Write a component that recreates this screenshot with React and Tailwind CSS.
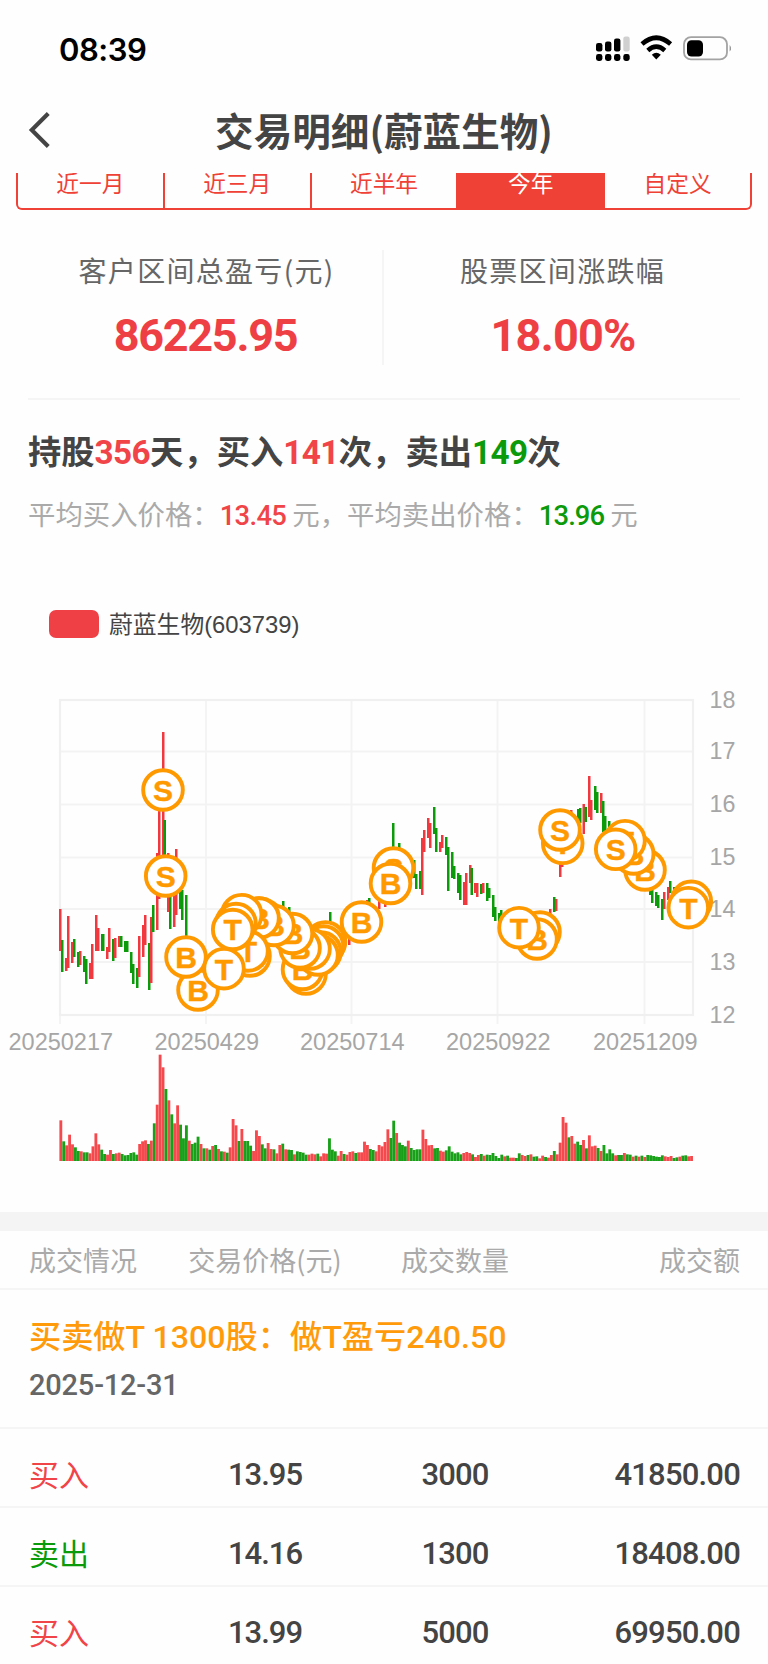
import { ChevronLeft } from 'lucide-react';

const RED = '#f0383e';
const GREEN = '#0a9a0a';
const ORANGE = '#ff9900';

const periods = ['近一月', '近三月', '近半年', '今年', '自定义'];

const trades = [
  { side: 'buy', price: '13.95', amount: '3000', total: '41850.00' },
  { side: 'sell', price: '14.16', amount: '1300', total: '18408.00' },
  { side: 'buy', price: '13.99', amount: '5000', total: '69950.00' },
];

// [x, high, low], positive x = up day, negative x = down day
const candles = [
  [60, 909, 951], [-62, 940, 972], [66, 958, 971], [68, 916, 968], [72, 942, 963],
  [-74, 939, 957], [-78, 952, 967], [80, 951, 965], [-84, 956, 972], [-86, 959, 984],
  [90, 963, 979], [92, 944, 979], [96, 915, 951], [98, 928, 951], [-102, 934, 951],
  [-103, 934, 951], [107, 947, 959], [109, 928, 952], [-113, 939, 961], [115, 938, 958],
  [119, 936, 947], [-121, 936, 947], [-125, 941, 952], [-127, 941, 952], [-131, 952, 973],
  [-133, 964, 984], [-137, 968, 988], [139, 936, 977], [143, 925, 957], [145, 915, 945],
  [-149, 943, 990], [151, 917, 983], [-153, 905, 932], [157, 853, 930], [159, 810, 899],
  [163, 732, 857], [-164.5, 820, 857], [168, 853, 912], [-170, 890, 929], [174, 890, 927],
  [176, 849, 915], [-180, 890, 909], [-182, 890, 920], [-186, 895, 938], [-283, 901, 915],
  [-289, 907, 915], [-330, 912, 925], [349, 930, 945], [367, 900, 905], [-369, 898, 905],
  [379, 900, 909], [385, 900, 907], [-393, 823, 850], [-399, 843, 852], [-414, 860, 878],
  [-416, 874, 889], [-420, 871, 889], [422, 838, 895], [424, 830, 852], [428, 818, 838],
  [430, 823, 848], [-434, 807, 834], [-436, 828, 852], [440, 842, 852], [442, 835, 848],
  [-446, 837, 855], [-448, 847, 891], [-452, 852, 878], [-454, 866, 879], [-458, 873, 893],
  [-460, 875, 900], [464, 882, 905], [466, 873, 905], [470, 865, 883], [-471.5, 868, 895],
  [475, 883, 893], [477, 883, 897], [-481, 884, 894], [483, 883, 893], [-487, 883, 901],
  [-489, 888, 898], [-493, 895, 917], [-495, 907, 921], [-499, 913, 922], [-501, 910, 920],
  [550, 909, 915], [-554, 897, 912], [556, 899, 911], [560, 863, 877], [562, 864, 867],
  [571, 810, 815], [-578, 809, 822], [-580, 808, 823], [583.5, 804, 834], [-585.5, 807, 822],
  [589, 776, 817], [591, 800, 820], [-595, 786, 810], [-597, 792, 813], [601, 793, 813],
  [-603, 801, 832], [-605, 816, 832], [-609, 821, 827], [-650, 890, 895], [-652, 890, 903],
  [-656, 892, 906], [-658, 895, 908], [-662, 899, 920], [664, 892, 909], [668, 887, 900],
  [-670, 881, 893], [-674, 887, 890],
];

// one value per trading day, negative = down day
const volumes = [
  122, -59, 47, 79, 50, -41, -30, 29, -26, -26, 23, 44, 83, 50, -34, -21, 19, 33, -21, 23,
  25, -21, -17, -18, -24, -26, -19, 51, 59, 62, -51, 61, -113, 169, 319, 281, -216, 182, -140, 113,
  167, -109, -68, -107, 61, -51, -55, -73, 51, -38, 38, -34, 45, -48, 36, -29, 28, -25, 41, 126,
  107, -60, 96, -60, -60, -46, 30, 92, 75, -50, -38, 54, 36, -35, 23, 48, -52, 35, -34, -33,
  20, -29, -27, -25, -19, 19, 22, 20, -22, 14, 23, 22, -68, -34, -29, 16, 30, -21, 19, 27,
  29, -24, 26, 26, 58, 48, -36, -33, 29, 48, 44, 57, 95, -69, -121, 84, -55, -48, -44, 61,
  -39, -33, -35, -35, 94, 66, 47, 48, -38, -39, 31, 28, -32, -44, -28, -23, -26, -20, 24, 27,
  24, -20, 12, 18, -21, 16, -19, -18, -24, -15, -9, -19, 14, -16, 10, 10, -9, -23, 18, 15,
  -18, 20, -13, -14, 8, 16, -12, 10, 18, -30, 20, 55, 132, 115, -71, 75, 52, -58, -48, 63,
  -38, 77, 44, 46, -39, 30, -48, -23, -35, -23, 17, -18, -18, 24, -20, -19, 13, -16, 13, -16,
  12, -18, -17, -15, -13, -12, -17, 14, 12, 15, -9, -11, 13, -16, -17, 14, 15,
];

// drawn in order, later markers cover earlier ones; no letter where it would be fully covered
const markers = [
  [163, 790, 'S'], [165.7, 876, 'S'], [198, 990, 'B'], [186, 957, 'B'],
  [306, 974], [302.5, 969.5, 'B'], [325.5, 942], [323.5, 946], [321, 952], [318, 955],
  [310, 949], [300, 948, 'B'], [292.5, 933.5, 'B'], [263, 920], [259, 918], [274, 925.5, 'B'], [259, 918, 'B'],
  [250, 956], [248, 951, 'T'], [241.7, 914.7], [236, 923.5], [232.7, 929.5, 'T'], [224, 968.7, 'T'],
  [361.5, 922, 'B'], [393.5, 868, 'S'], [390.5, 883.5, 'B'],
  [540, 932, 'B'], [537, 939, 'B'], [519, 927.7, 'T'],
  [562.7, 843.3, 'T'], [560, 830, 'S'],
  [645, 870, 'B'], [633.7, 854, 'B'], [625, 840.7, 'T'], [615.7, 849.3, 'S'],
  [691.3, 901.3], [688.3, 907.7, 'T'],
];

const priceTicks = [
  [700, '18'], [751.5, '17'], [804.5, '16'], [857.5, '15'], [909, '14'], [962, '13'], [1015, '12'],
];

const dateTicks = [
  [60, '20250217'], [206, '20250429'], [351.5, '20250714'], [497.5, '20250922'], [644.5, '20251209'],
];

function StatusIcons() {
  return (
    <svg width="140" height="30" viewBox="590 34 140 30">
      {[595, 604, 613, 622.3].map((x, i) => (
        <g key={x}>
          <rect
            x={x}
            y={[43, 41.5, 38.5, 36.5][i]}
            width="6.4"
            height={[8.5, 10, 13, 15][i]}
            rx="2.2"
            fill={i === 3 ? '#d0d0d0' : '#000'}
          />
          <rect x={x} y="54" width="6.4" height="7" rx="2.4" fill="#000" />
        </g>
      ))}
      <path d="M641 44 Q655.3 31.5 669.6 44" stroke="#000" strokeWidth="4.6" fill="none" />
      <path d="M646.8 50.4 Q655.3 43 663.8 50.4" stroke="#000" strokeWidth="4.6" fill="none" />
      <path d="M650.8 54.8 Q655.3 50.6 659.8 54.8 L655.3 59.6 Z" fill="#000" />
      <rect x="683" y="37.2" width="43" height="22.2" rx="7" stroke="#a3a3a3" strokeWidth="1.8" fill="none" />
      <rect x="686" y="40.2" width="16" height="16.4" rx="4.5" fill="#000" />
      <path d="M728.6 45 Q731.6 48.3 728.6 51.6 Z" fill="#999" />
    </svg>
  );
}

function PriceChart() {
  return (
    <svg className="block" width="768" height="500" viewBox="0 680 768 500">
      {priceTicks.map(([y, label]) => (
        <g key={label}>
          <line x1="60" x2="693" y1={y} y2={y} stroke="#f3f3f3" strokeWidth="1.8" />
          <text x="709.5" y={y + 7.6} fontSize="23.3" fill="#a6a6a6">{label}</text>
        </g>
      ))}
      {dateTicks.map(([x, label]) => (
        <g key={label}>
          <line x1={x} x2={x} y1="700" y2="1024" stroke="#f3f3f3" strokeWidth="1.8" />
          <text x={x + 0.8} y="1050" fontSize="23.5" fill="#a6a6a6" textAnchor="middle">{label}</text>
        </g>
      ))}
      <rect x="60" y="700" width="633" height="315" fill="none" stroke="#f0f0f0" strokeWidth="2.2" />

      {candles.map(([x, high, low], i) => (
        <rect key={i} x={Math.abs(x) - 1} y={high} width="2.5" height={low - high} fill={x > 0 ? RED : GREEN} />
      ))}

      {volumes.map((v, i) => (
        <rect
          key={i}
          x={59.4 + i * 2.92}
          y={1161 - Math.abs(v) / 3}
          width="2.85"
          height={Math.abs(v) / 3}
          fill={v > 0 ? '#f5494d' : '#18a018'}
        />
      ))}

      {markers.map(([x, y, type], i) => (
        <g key={i}>
          <circle cx={x} cy={y} r="19.8" fill="#fff" stroke={ORANGE} strokeWidth="3.9" />
          {type && (
            <text
              x={x}
              y={y + 10.8}
              fontSize="30"
              fontWeight="bold"
              fill={ORANGE}
              stroke={ORANGE}
              strokeWidth="0.4"
              textAnchor="middle"
            >
              {type}
            </text>
          )}
        </g>
      ))}
    </svg>
  );
}

function Num({ className = '', children }) {
  return <span className={`font-['Roboto','Noto_Sans_CJK_SC',sans-serif] ${className}`}>{children}</span>;
}

function TradeRow({ trade }) {
  const buy = trade.side === 'buy';
  return (
    <div className="flex h-[79px] items-center border-b-2 border-[#f5f5f5] pt-[15px] pl-[29px] pr-[28px] text-[31px] text-[#444]">
      <div className={`w-[150px] text-[30px] ${buy ? 'text-[#f04448]' : 'text-[#0a9a0a]'}`}>{buy ? '买入' : '卖出'}</div>
      <Num className="w-[172px] text-center font-medium tracking-[-1px]">{trade.price}</Num>
      <Num className="w-[208px] text-center font-medium tracking-[-0.9px]">{trade.amount}</Num>
      <Num className="flex-1 text-right font-medium tracking-[-0.8px]">{trade.total}</Num>
    </div>
  );
}

export default function App() {
  return (
    <div className="h-[1664px] w-[768px] overflow-hidden whitespace-nowrap bg-[#fefefe] font-['Liberation_Sans','Noto_Sans_CJK_SC',sans-serif]">
      {/* Status bar */}
      <div className="flex h-[97px] items-center justify-between pl-[59px] pr-[37px]">
        <span className="pt-[3px] font-['Inter',sans-serif] text-[31px] font-semibold tracking-[-0.5px] text-black">08:39</span>
        <StatusIcons />
      </div>

      {/* Title bar */}
      <div className="grid h-[76px] grid-cols-[100px_1fr_100px] items-center">
        <ChevronLeft className="ml-[7px] -mt-[11px] h-[66px] w-[66px] text-[#444]" strokeWidth={1.5} strokeLinecap="butt" strokeLinejoin="miter" />
        <h1 className="pb-3 text-center font-['Noto_Sans_CJK_SC',sans-serif] text-[38.6px] leading-[60px] font-bold text-[#444]">
          交易明细(蔚蓝生物)
        </h1>
      </div>

      {/* Period tabs, scrolled partly under the title bar */}
      <div className="mx-4 flex h-[37px] overflow-hidden rounded-b-[6px] border-2 border-t-0 border-[#ef4136]">
        {periods.map((p, i) => (
          <div
            key={p}
            className={`flex-1 text-center font-['Noto_Sans_CJK_SC',sans-serif] text-[22.7px] leading-[19px] ${
              i < 4 ? 'border-r-2 border-[#ef4136]' : ''
            } ${p === '今年' ? 'bg-[#ef4136] text-white' : 'text-[#ef4136]'}`}
          >
            {p}
          </div>
        ))}
      </div>

      {/* Totals */}
      <div className="mx-7 flex h-[190px] border-b-2 border-[#f5f5f5] pt-[40px]">
        <div className="h-[115px] w-[356px] border-r-2 border-[#f5f5f5] text-center">
          <p className="pl-[3px] font-['Noto_Sans_CJK_SC',sans-serif] text-[28px] leading-[41px] tracking-[1.3px] text-[#666]">客户区间总盈亏(元)</p>
          <Num className="block pt-[17px] pl-[1px] text-[45px] leading-[56px] font-bold tracking-[-1.3px] text-[#ee4044]">86225.95</Num>
        </div>
        <div className="flex-1 text-center">
          <p className="pl-[1px] font-['Noto_Sans_CJK_SC',sans-serif] text-[28px] leading-[41px] tracking-[1.3px] text-[#666]">股票区间涨跌幅</p>
          <Num className="block pt-[17px] pl-[2px] text-[45px] leading-[56px] font-bold tracking-[-0.8px] text-[#ee4044]">18.00%</Num>
        </div>
      </div>

      {/* Summary */}
      <div className="h-[190px] px-7 pt-[29px]">
        <p className="font-['Roboto','Noto_Sans_CJK_SC',sans-serif] text-[33.3px] leading-[48px] font-bold text-[#444]">
          持股<Num className="tracking-[-0.6px] text-[#f04448]">356</Num>天，买入
          <Num className="tracking-[-0.6px] text-[#f04448]">141</Num>次，卖出
          <Num className="tracking-[-0.6px] text-[#0a9a0a]">149</Num>次
        </p>
        <p className="pt-[17px] font-['Noto_Sans_CJK_SC',sans-serif] text-[27.4px] leading-[38px] text-[#aaa]">
          平均买入价格：<Num className="font-medium tracking-[-0.7px] text-[#f04448]">13.45</Num> 元，平均卖出价格：
          <Num className="font-medium tracking-[-0.9px] text-[#0a9a0a]">13.96</Num> 元
        </p>
      </div>

      {/* Chart */}
      <div className="flex h-[90px] items-center gap-[10px] pb-[22px] pl-[49px]">
        <div className="h-[28px] w-[50px] rounded-[7px] bg-[#ef4045]" />
        <span className="pt-[2px] text-[23.8px] text-[#444]">蔚蓝生物(603739)</span>
      </div>
      <PriceChart />

      {/* Trade list */}
      <div className="mt-8 h-[19px] bg-[#f4f4f4]" />
      <div className="flex h-[59px] items-center border-b-2 border-[#f5f5f5] pt-[2px] pl-[29px] pr-[28px] font-['Noto_Sans_CJK_SC',sans-serif] text-[27px] text-[#aaa]">
        <span className="w-[150px]">成交情况</span>
        <span className="w-[172px] text-center">交易价格(元)</span>
        <span className="w-[208px] text-center">成交数量</span>
        <span className="flex-1 text-right">成交额</span>
      </div>
      <div className="h-[139px] border-b-2 border-[#f5f5f5] pt-[23px] pl-[29px]">
        <p className="font-['Roboto','Noto_Sans_CJK_SC',sans-serif] text-[32.2px] leading-[48px] font-medium text-[#ff9b0a]">
          买卖做T 1300股：做T盈亏240.50
        </p>
        <Num className="block text-[29px] leading-[48px] font-medium tracking-[-0.2px] text-[#666]">2025-12-31</Num>
      </div>
      {trades.map((t) => (
        <TradeRow key={t.price} trade={t} />
      ))}
    </div>
  );
}
